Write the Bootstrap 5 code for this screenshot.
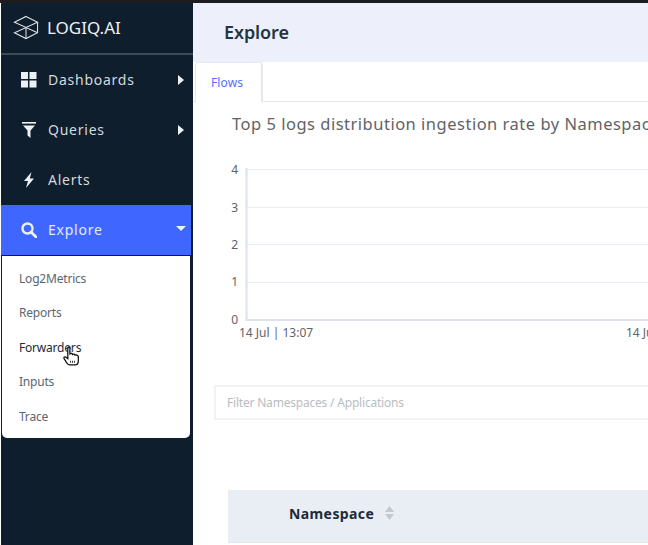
<!DOCTYPE html>
<html lang="en">
<head>
  <meta charset="UTF-8" />
  <title>Explore</title>
  <link href="https://cdn.jsdelivr.net/npm/bootstrap@5.3.0/dist/css/bootstrap.min.css" rel="stylesheet">
  <style>
    html, body { height: 545px; overflow: hidden; }
    body { background: #fff; font-family: "Noto Sans", "Open Sans", sans-serif; border-top: 3px solid #1b1d20; }
    .app-shell { height: 542px; }
    .side-bar { width: 192px; margin-left: 1px; background: #0f1e2c; flex-shrink: 0; }
    .logo-row { height: 52px; border-bottom: 2px solid #3c4b55; color: #eef1f4; font-size: 17px; padding: 0 0 1px 12px; gap: 8px; }
    .side-link { height: 50px; padding-left: 20px; padding-right: 8px; color: #d3d9de; font-size: 14px; letter-spacing: .75px; }
    .side-link.is-open { background: #3f67ff; color: #e4e9ff; margin-right: 2px; }
    .side-label { margin-top: -2px; }
    .side-ico { width: 16px; height: 16px; margin-right: 11px; fill: #eef1f4; }
    .tri-right { width: 0; height: 0; border-left: 6px solid #eef1f4; border-top: 5px solid transparent; border-bottom: 5px solid transparent; margin-right: 1px; }
    .tri-down { width: 0; height: 0; border-top: 5px solid #eef1f4; border-left: 5px solid transparent; border-right: 5px solid transparent; margin: -3px -3px 0 0; }
    .side-menu { background: #fff; margin: 1px 3px 0 1px; height: 182px; border-radius: 0 0 5px 5px; padding-top: 5px; }
    .side-menu a { display: flex; align-items: center; height: 34.5px; padding: 1px 0 0 17px; font-size: 12px; letter-spacing: -.2px; color: #5b6570; text-decoration: none; position: relative; }
    .side-menu a.is-hover { color: #1d2a38; }
    .hand-cursor { position: absolute; left: 61px; top: 16px; width: 18px; height: 20px; }
    .main-pane { min-width: 0; overflow: hidden; }
    .page-head { height: 59px; background: #edf0fb; padding-left: 31px; font-size: 18px; font-weight: 600; color: #253342; letter-spacing: -.1px; }
    .tab-strip { height: 40px; border-bottom: 1px solid #e6e8eb; padding-left: 2px; }
    .flow-tab { width: 68px; height: 40px; margin-bottom: -1px; background: #fff; border: 1px solid #e6e8eb; border-bottom: 0; border-radius: 3px 3px 0 0; color: #4f6fff; font-size: 12px; border-right-width: 2px; padding-right: 3px; letter-spacing: .1px; }
    .chart-title { margin: 11px 0 0 39px; font-size: 16.5px; line-height: 22px; color: #5f6368; letter-spacing: .5px; white-space: nowrap; }
    .chart-svg { display: block; width: 455px; height: 200px; margin-top: 28px; }
    .chart-svg text { font-family: "Noto Sans", sans-serif; font-size: 12px; fill: #5f6368; }
    .filter-box { margin: 22px 0 0 21px; height: 35px; width: 460px; border: 2px solid #f1f2f6; padding-left: 11px; font-size: 12px; letter-spacing: -.2px; color: #b9bcc2; }
    .table-head { margin: 70px 0 0 35px; height: 53px; background: #e9eef5; border-bottom: 1px solid #e3e6ea; padding: 0 0 6px 61px; font-size: 14px; font-weight: 700; color: #1d2a38; letter-spacing: .4px; }
    .sort-ico { width: 9px; height: 14px; margin-left: 11px; fill: #c3c8ce; }
  </style>
</head>
<body>

<div class="app-shell d-flex">
  <!-- Sidebar -->
  <div class="side-bar">
    <div class="logo-row d-flex align-items-center">
      <svg width="26" height="25" viewBox="0 0 27 25" fill="none" stroke="#dfe3e6" stroke-width="1.1">
        <path d="M13.5 1 25.5 7 13.5 12.5 1.5 7Z"/>
        <path d="M25.5 7V18L13.5 24 1.5 18 13.5 12.5 25.5 18"/>
        <path d="M13.5 12.5V24"/>
      </svg>
      <span>LOGIQ.AI</span>
    </div>
    <div class="side-link d-flex align-items-center">
      <svg class="side-ico" viewBox="0 0 16 16"><rect x="0" y="0" width="7" height="7"/><rect x="8.5" y="0" width="7" height="7"/><rect x="0" y="8.5" width="7" height="7"/><rect x="8.5" y="8.5" width="7" height="7"/></svg>
      <span class="side-label flex-grow-1">Dashboards</span>
      <span class="tri-right"></span>
    </div>
    <div class="side-link d-flex align-items-center">
      <svg class="side-ico" viewBox="0 0 16 16"><path d="M1 0H15V1.6H1Z"/><path d="M2 3.5H14L9.5 8.500V16L6.500 13.500V8.500Z"/></svg>
      <span class="side-label flex-grow-1">Queries</span>
      <span class="tri-right"></span>
    </div>
    <div class="side-link d-flex align-items-center">
      <svg class="side-ico" viewBox="0 0 16 16"><path d="M10.500 0 3 9H7L5 16 13 6.500H8.800Z"/></svg>
      <span class="side-label flex-grow-1">Alerts</span>
    </div>
    <div class="side-link is-open d-flex align-items-center">
      <svg class="side-ico" viewBox="0 0 16 16"><circle cx="6.500" cy="6.500" r="5" fill="none" stroke="#eef1f4" stroke-width="2.400"/><path d="M10 10 15 15" stroke="#eef1f4" stroke-width="2.800" stroke-linecap="round"/></svg>
      <span class="side-label flex-grow-1">Explore</span>
      <span class="tri-down"></span>
    </div>
    <div class="side-menu">
      <a href="#">Log2Metrics</a>
      <a href="#">Reports</a>
      <a href="#" class="is-hover">Forwarders
        <svg class="hand-cursor" viewBox="0 0 17 19"><path d="M4.500 2C4.500.6 6.500.6 6.500 2V7.500C7.500 6.800 8.800 7 9 8 10 7.400 11.200 7.700 11.400 8.600 12.400 8.200 14 8.600 14.500 10V14C14.500 16.500 13.500 18 11.500 18H6.500C5 18 4.200 17 3.500 16L1 12C.4 10.800 1.800 9.800 2.800 10.600L4.500 12Z" fill="#fff" stroke="#111" stroke-width="1.200"/><path d="M7 14V16M9 14V16M11 14V16" stroke="#111" stroke-width=".8"/></svg>
      </a>
      <a href="#">Inputs</a>
      <a href="#">Trace</a>
    </div>
  </div>

  <!-- Main -->
  <div class="main-pane flex-grow-1">
    <div class="page-head d-flex align-items-center">Explore</div>
    <div class="tab-strip d-flex">
      <div class="flow-tab d-flex align-items-center justify-content-center">Flows</div>
    </div>
    <div class="chart-title">Top 5 logs distribution ingestion rate by Namespace</div>
    <svg class="chart-svg" viewBox="0 0 455 200">
      <g stroke="#e8ecf6" stroke-width="1">
        <path d="M53 6.500H455M53 44.500H455M53 81.500H455M53 119.500H455"/>
      </g>
      <path d="M53.500 5V157H455" fill="none" stroke="#dde2ee" stroke-width="2"/>
      <g text-anchor="end">
        <text x="45" y="11">4</text>
        <text x="45" y="49">3</text>
        <text x="45" y="86">2</text>
        <text x="45" y="123">1</text>
        <text x="45" y="161">0</text>
      </g>
      <text x="46" y="174">14 Jul | 13:07</text>
      <text x="433" y="174">14 Jul | 13:07</text>
    </svg>
    <div class="filter-box d-flex align-items-center">Filter Namespaces / Applications</div>
    <div class="table-head d-flex align-items-center">
      <span>Namespace</span>
      <svg class="sort-ico" viewBox="0 0 9 14"><path d="M4.500 0 9 6H0Z"/><path d="M0 8H9L4.500 14Z"/></svg>
    </div>
  </div>
</div>

<script src="https://cdn.jsdelivr.net/npm/bootstrap@5.3.0/dist/js/bootstrap.bundle.min.js"></script>
</body>
</html>
